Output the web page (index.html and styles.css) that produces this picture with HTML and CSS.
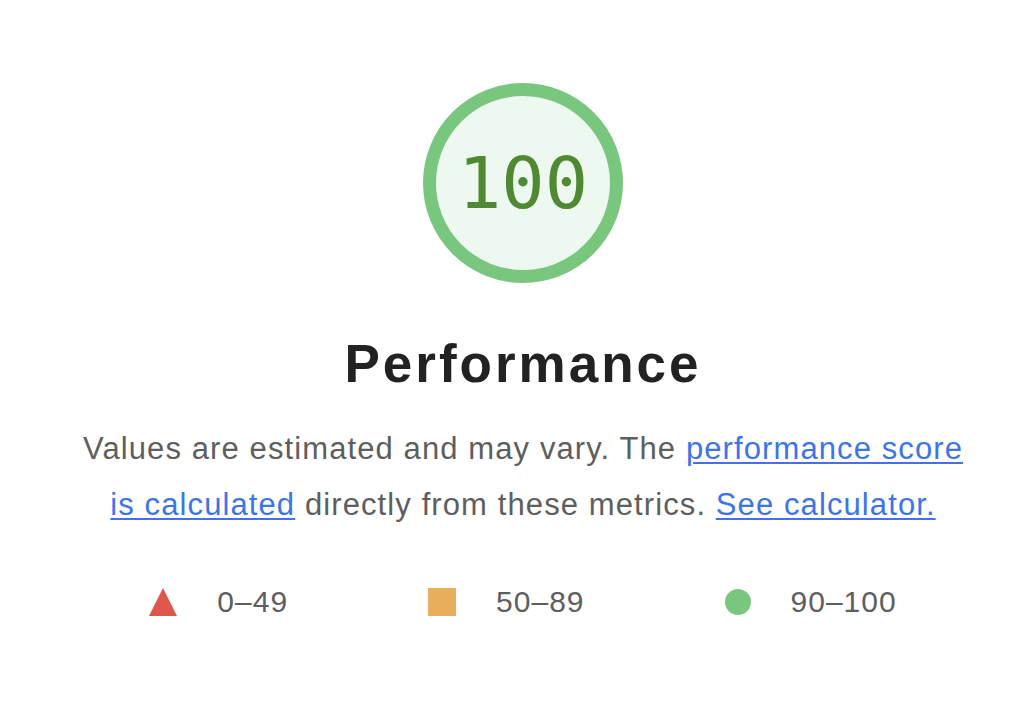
FILE: index.html
```html
<!DOCTYPE html>
<html lang="en">
<head>
    <meta charset="UTF-8">
    <meta name="viewport" content="width=device-width, initial-scale=1.0">
    <title>Performance</title>
    <link rel="stylesheet" href="styles.css">
</head>
<body>
    <main class="score-card">
        <div class="gauge">
            <span class="gauge-value">100</span>
        </div>

        <h1 class="gauge-title">Performance</h1>

        <p class="gauge-desc">
            Values are estimated and may vary. The <a href="#">performance score is calculated</a>
            directly from these metrics. <a href="#">See calculator.</a>
        </p>

        <div class="legend">
            <div class="legend-item">
                <svg class="legend-icon" viewBox="0 0 28 28"><polygon points="14,0 28,28 0,28" fill="#dd574a"/></svg>
                <span>0–49</span>
            </div>
            <div class="legend-item">
                <span class="legend-icon square"></span>
                <span>50–89</span>
            </div>
            <div class="legend-item">
                <span class="legend-icon dot"></span>
                <span>90–100</span>
            </div>
        </div>
    </main>
</body>
</html>
```

FILE: styles.css
```css
body {
    margin: 0;
    background-color: #fff;
    font-family: 'Liberation Sans', Arial, sans-serif;
}
.score-card {
    display: flex;
    flex-direction: column;
    align-items: center;
    padding: 83px 0 0 22px;
}
.gauge {
    box-sizing: border-box;
    width: 200px;
    height: 200px;
    border: 13px solid #79c77e;
    border-radius: 50%;
    background-color: #ecf8f0;
    display: flex;
    align-items: center;
    justify-content: center;
}
.gauge-value {
    font-family: 'DejaVu Sans Mono', monospace;
    font-size: 72px;
    color: #4f8a32;
    line-height: 1;
}
.gauge-title {
    margin: 51px 0 0;
    font-size: 53px;
    font-weight: bold;
    letter-spacing: 3px;
    color: #222;
    line-height: 60px;
}
.gauge-desc {
    margin: 27px 0 0;
    max-width: 900px;
    font-size: 31px;
    letter-spacing: 1.1px;
    line-height: 56px;
    color: #5e5e5e;
    text-align: center;
}
.gauge-desc a {
    color: #3d74e8;
    text-decoration-thickness: 2px;
    text-underline-offset: 3px;
}
.legend {
    display: flex;
    gap: 140px;
    margin-top: 52px;
    font-size: 30px;
    letter-spacing: 1px;
    color: #5e5e5e;
}
.legend-item {
    display: flex;
    align-items: center;
    gap: 40px;
}
.legend-icon {
    display: block;
    width: 28px;
    height: 28px;
}
.square {
    background-color: #e9ae5b;
}
.dot {
    width: 26px;
    height: 26px;
    border-radius: 50%;
    background-color: #79c77e;
}
```
